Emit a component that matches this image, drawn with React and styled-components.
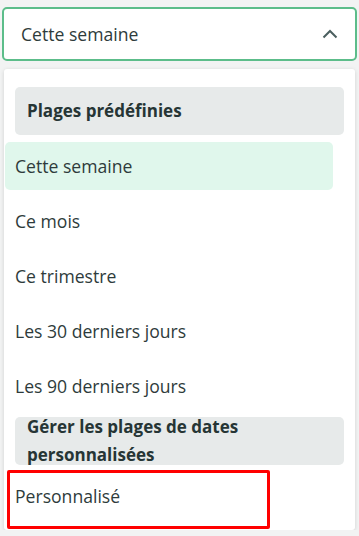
import React, { useState } from 'react';
import styled, { createGlobalStyle } from 'styled-components';

const GlobalStyle = createGlobalStyle`
  html, body {
    margin: 0;
    padding: 0;
    background: #f2f3f3;
    font-family: "Open Sans", "Noto Sans", sans-serif;
  }
`;

const Page = styled.div`
  padding: 7px 2px 0;
  width: 355px;
`;

const Trigger = styled.button`
  box-sizing: border-box;
  width: 100%;
  height: 54px;
  display: flex;
  align-items: center;
  justify-content: space-between;
  padding: 0 17px 0 17px;
  background: #ffffff;
  border: 2px solid #5cbd8a;
  border-radius: 5px;
  font-family: inherit;
  font-size: 17.6px;
  color: #2e3b3b;
  cursor: pointer;
`;

const Menu = styled.div`
  box-sizing: border-box;
  margin: 8px 2px 0;
  padding: 18px 0 10px;
  background: #ffffff;
  border-radius: 3px;
  box-shadow: 0 1px 4px rgba(0, 0, 0, 0.14);
`;

const GroupLabel = styled.div`
  box-sizing: border-box;
  height: 48px;
  margin: 0 11px 7px;
  padding: 0 12px;
  display: flex;
  align-items: center;
  background: #e7eaea;
  border-radius: 5px;
  font-size: 17px;
  font-weight: 700;
  line-height: 28px;
  color: #263535;
`;

const Option = styled.div`
  position: relative;
  box-sizing: border-box;
  height: 48px;
  margin: 0 22px 7px 1px;
  padding: 0 10px;
  display: flex;
  align-items: center;
  border-radius: 5px;
  font-size: 17.6px;
  color: #2e3b3b;
  background: ${(p) => (p.$selected ? '#e0f7ec' : 'transparent')};
  cursor: pointer;
  &:last-child {
    margin-bottom: 0;
  }
`;

const Highlight = styled.span`
  position: absolute;
  left: 2px;
  top: -2px;
  width: 263px;
  height: 59px;
  box-sizing: border-box;
  border: 3px solid #ff0000;
  border-radius: 2px;
  pointer-events: none;
`;

const Chevron = () => (
  <svg width="16" height="10" viewBox="0 0 16 10" fill="none">
    <path d="M1.5 8.5L8 2l6.5 6.5" stroke="#4b5f5f" strokeWidth="2" />
  </svg>
);

const presets = [
  'Cette semaine',
  'Ce mois',
  'Ce trimestre',
  'Les 30 derniers jours',
  'Les 90 derniers jours',
];

const App = () => {
  const [value, setValue] = useState('Cette semaine');

  return (
    <Page>
      <GlobalStyle />
      <Trigger>
        <span>{value}</span>
        <Chevron />
      </Trigger>
      <Menu>
        <GroupLabel>Plages prédéfinies</GroupLabel>
        {presets.map((p) => (
          <Option key={p} $selected={p === value} onClick={() => setValue(p)}>
            {p}
          </Option>
        ))}
        <GroupLabel>Gérer les plages de dates personnalisées</GroupLabel>
        <Option onClick={() => setValue('Personnalisé')}>
          Personnalisé
          <Highlight />
        </Option>
      </Menu>
    </Page>
  );
};

export default App;
